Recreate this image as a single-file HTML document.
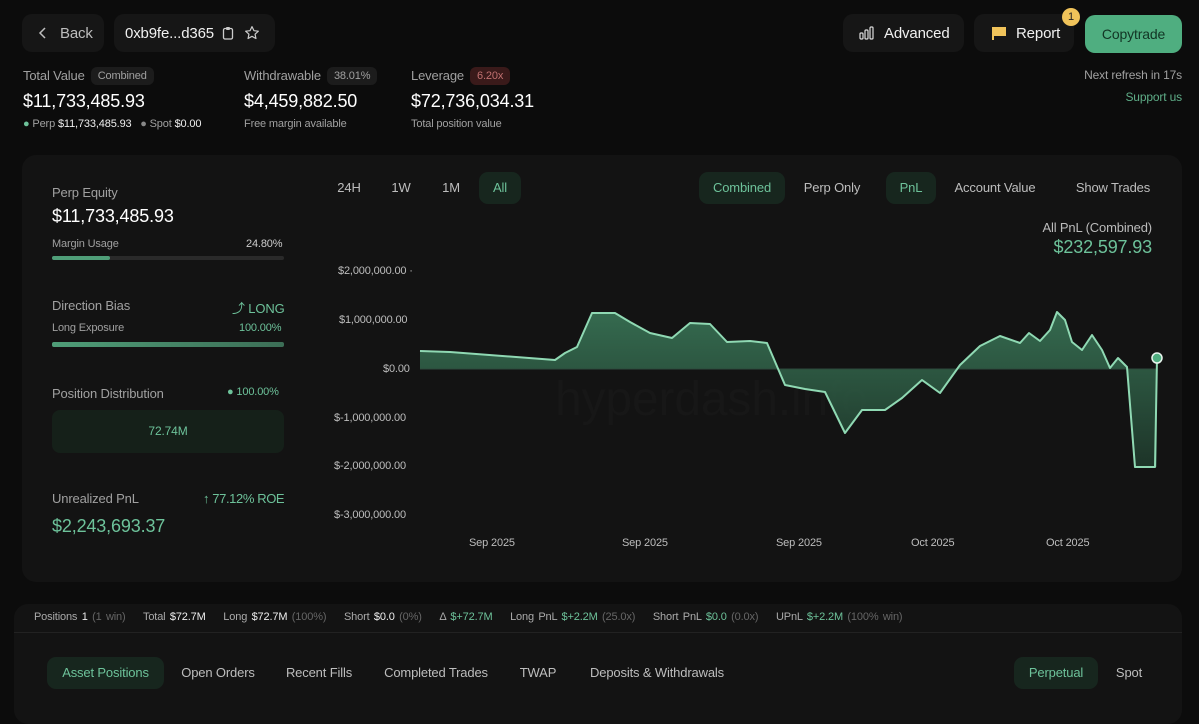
<!DOCTYPE html>
<html><head><meta charset="utf-8"><style>
*{box-sizing:border-box;margin:0;padding:0}
body{width:1199px;height:711px;background:#0c0c0c;font-family:"Liberation Sans",sans-serif;color:#e8e8e8;position:relative;overflow:hidden;letter-spacing:-0.15px}
.a{position:absolute;white-space:nowrap}
.btn{position:absolute;background:#161616;border-radius:10px;height:38px;display:flex;align-items:center;font-size:15px}
.g{color:#6dc29a}
.mut{color:#a0a0a0}
.pill{display:inline-block;background:#1c1c1c;border-radius:6px;padding:3px 7px;font-size:11px;color:#a0a0a0;margin-left:6px;vertical-align:1px}
.card{position:absolute;background:#131313;border-radius:14px}
.tab{position:absolute;font-size:13px;color:#bdbdbd;height:32px;line-height:32px;border-radius:9px;text-align:center}
.on{background:#17261e;color:#6dc29a}
.yl{position:absolute;left:334px;font-size:11px;color:#bdbdbd}
.xl{position:absolute;top:537px;font-size:11px;color:#bdbdbd}
.bar{position:absolute;height:4px;border-radius:2px;background:#2a2a2a}
</style></head><body>
<div class="btn" style="left:22px;top:14px;width:82px;padding-left:16px;color:#bdbdbd"><svg width="10" height="14" viewBox="0 0 10 14"><path d="M7 2 2 7l5 5" stroke="#bdbdbd" stroke-width="1.5" fill="none"/></svg><span style="margin-left:12px">Back</span></div>
<div class="btn" style="left:114px;top:14px;width:161px;padding-left:11px;color:#f0f0f0">0xb9fe...d365
<svg style="margin-left:8px" width="12" height="14" viewBox="0 0 12 14"><rect x="1.5" y="2.5" width="9" height="10.5" rx="1.5" stroke="#ccc" fill="none" stroke-width="1.3"/><rect x="4" y="1" width="4" height="3" rx="1" fill="#ccc"/></svg>
<svg style="margin-left:10px" width="16" height="16" viewBox="0 0 24 24"><path d="M12 2.5l2.9 6 6.6.8-4.9 4.5 1.3 6.5L12 17l-5.9 3.3 1.3-6.5L2.5 9.3l6.6-.8z" stroke="#ccc" stroke-width="1.8" fill="none" stroke-linejoin="round"/></svg></div>

<div class="btn" style="left:843px;top:14px;width:121px;padding-left:16px;color:#f0f0f0"><svg width="16" height="14" viewBox="0 0 16 14"><rect x="1" y="7" width="3" height="6" rx="1" stroke="#ddd" fill="none" stroke-width="1.2"/><rect x="6" y="4" width="3" height="9" rx="1" stroke="#ddd" fill="none" stroke-width="1.2"/><rect x="11" y="1" width="3" height="12" rx="1" stroke="#ddd" fill="none" stroke-width="1.2"/></svg><span style="margin-left:9px">Advanced</span></div>
<div class="btn" style="left:974px;top:14px;width:100px;padding-left:17px;color:#f0f0f0"><svg width="16" height="14" viewBox="0 0 16 14"><path d="M1 1h14v9H3v4H1z" fill="#f0c35a"/></svg><span style="margin-left:9px">Report</span></div>
<div class="a" style="left:1062px;top:8px;width:18px;height:18px;border-radius:9px;background:#f0c35a;color:#222;font-size:11px;text-align:center;line-height:18px">1</div>
<div class="btn" style="left:1085px;top:15px;width:97px;background:#4fae80;color:#123524;justify-content:center;font-size:14px">Copytrade</div>
<div class="a mut" style="right:17px;top:68px;font-size:12px">Next refresh in 17s</div>
<div class="a g" style="right:17px;top:90px;font-size:12px;color:#5fae88">Support us</div>

<div class="a mut" style="left:23px;top:67px;font-size:13px">Total Value<span class="pill">Combined</span></div>
<div class="a" style="left:23px;top:91px;font-size:18px;color:#fff">$11,733,485.93</div>
<div class="a mut" style="left:23px;top:118px;font-size:11px"><span class="g">●</span> Perp <span style="color:#eee">$11,733,485.93</span> &nbsp; <span style="color:#888">●</span> Spot <span style="color:#eee">$0.00</span></div>
<div class="a mut" style="left:244px;top:67px;font-size:13px">Withdrawable<span class="pill">38.01%</span></div>
<div class="a" style="left:244px;top:91px;font-size:18px;color:#fff">$4,459,882.50</div>
<div class="a mut" style="left:244px;top:118px;font-size:11px">Free margin available</div>
<div class="a mut" style="left:411px;top:67px;font-size:13px">Leverage<span class="pill" style="background:#3a1a1a;color:#c07070">6.20x</span></div>
<div class="a" style="left:411px;top:91px;font-size:18px;color:#fff">$72,736,034.31</div>
<div class="a mut" style="left:411px;top:118px;font-size:11px">Total position value</div>

<div class="card" style="left:22px;top:155px;width:1160px;height:427px"></div>
<div class="a mut" style="left:52px;top:185px;font-size:13px">Perp Equity</div>
<div class="a" style="left:52px;top:206px;font-size:18px;color:#fff">$11,733,485.93</div>
<div class="a mut" style="left:52px;top:238px;font-size:11px">Margin Usage</div>
<div class="a mut" style="left:246px;top:238px;font-size:11px;color:#ccc">24.80%</div>
<div class="bar" style="left:52px;top:256px;width:232px"></div><div class="bar" style="left:52px;top:256px;width:58px;background:#4f9e78"></div>
<div class="a mut" style="left:52px;top:298px;font-size:13px">Direction Bias</div>
<div class="a g" style="left:232px;top:298px;font-size:13px">⤴ LONG</div>
<div class="a mut" style="left:52px;top:322px;font-size:11px">Long Exposure</div>
<div class="a g" style="left:239px;top:322px;font-size:11px">100.00%</div>
<div class="bar" style="left:52px;top:342px;width:232px;height:5px;background:linear-gradient(90deg,#4f9e78,#3c6e56)"></div>
<div class="a mut" style="left:52px;top:386px;font-size:13px">Position Distribution</div>
<div class="a g" style="left:227px;top:386px;font-size:11px">● 100.00%</div>
<div class="a" style="left:52px;top:410px;width:232px;height:43px;border-radius:8px;background:#152019;color:#6dc29a;font-size:12px;text-align:center;line-height:43px">72.74M</div>
<div class="a mut" style="left:52px;top:491px;font-size:13px">Unrealized PnL</div>
<div class="a g" style="left:203px;top:491px;font-size:13px;letter-spacing:-0.4px">↑ 77.12% ROE</div>
<div class="a g" style="left:52px;top:516px;font-size:18px">$2,243,693.37</div>

<div class="tab" style="left:328px;top:172px;width:42px">24H</div>
<div class="tab" style="left:382px;top:172px;width:38px">1W</div>
<div class="tab" style="left:432px;top:172px;width:38px">1M</div>
<div class="tab on" style="left:479px;top:172px;width:42px">All</div>
<div class="tab on" style="left:699px;top:172px;width:86px">Combined</div>
<div class="tab" style="left:795px;top:172px;width:74px">Perp Only</div>
<div class="tab on" style="left:886px;top:172px;width:50px">PnL</div>
<div class="tab" style="left:944px;top:172px;width:102px">Account Value</div>
<div class="tab" style="left:1066px;top:172px;width:94px">Show Trades</div>
<div class="a mut" style="right:47px;top:220px;font-size:13px;color:#bbb">All PnL (Combined)</div>
<div class="a g" style="right:47px;top:237px;font-size:18px">$232,597.93</div>

<div class="yl" style="top:265px;left:338px">$2,000,000.00 ·</div>
<div class="yl" style="top:314px;left:339px">$1,000,000.00</div>
<div class="yl" style="top:363px;left:383px">$0.00</div>
<div class="yl" style="top:412px">$-1,000,000.00</div>
<div class="yl" style="top:460px">$-2,000,000.00</div>
<div class="yl" style="top:509px">$-3,000,000.00</div>
<div class="xl" style="left:469px">Sep 2025</div>
<div class="xl" style="left:622px">Sep 2025</div>
<div class="xl" style="left:776px">Sep 2025</div>
<div class="xl" style="left:911px">Oct 2025</div>
<div class="xl" style="left:1046px">Oct 2025</div>
<div class="a" style="left:555px;top:372px;font-size:48px;color:#171717">hyperdash.info</div>
<svg class="a" style="left:0;top:0" width="1199" height="711">
<defs><linearGradient id="gr" x1="0" y1="0" x2="0" y2="1"><stop offset="0" stop-color="#3b7a5a"/><stop offset="1" stop-color="#1f3a2c"/></linearGradient></defs>
<path d="M420 369 L420 351 L450 352 L555 360 L565 353 L577 347 L592 313 L615 313 L630 322 L650 333 L672 338 L690 323 L710 324 L727 342 L750 341 L767 343 L785 385 L805 389 L825 392 L845 433 L862 410 L885 410 L902 398 L922 380 L940 393 L960 365 L980 346 L1000 336 L1020 343 L1029 333 L1040 341 L1050 330 L1057 312 L1065 320 L1072 342 L1082 350 L1092 335 L1102 350 L1110 368 L1118 358 L1127 367 L1135 467 L1157 467 L1157 369 Z" fill="url(#gr)" opacity="0.85"/>
<line x1="420" y1="369" x2="1157" y2="369" stroke="#2e4a3c" stroke-width="1"/>
<path d="M420 351 L450 352 L555 360 L565 353 L577 347 L592 313 L615 313 L630 322 L650 333 L672 338 L690 323 L710 324 L727 342 L750 341 L767 343 L785 385 L805 389 L825 392 L845 433 L862 410 L885 410 L902 398 L922 380 L940 393 L960 365 L980 346 L1000 336 L1020 343 L1029 333 L1040 341 L1050 330 L1057 312 L1065 320 L1072 342 L1082 350 L1092 335 L1102 350 L1110 368 L1118 358 L1127 367 L1135 467 L1155 467 L1157 358" fill="none" stroke="#8fd9b3" stroke-width="2" stroke-linejoin="round"/>
<circle cx="1157" cy="358" r="5" fill="#4fae80" stroke="#e8f5ee" stroke-width="1.5"/>
</svg>

<div class="card" style="left:14px;top:604px;width:1168px;height:120px;border-radius:14px"></div>
<div class="a" style="left:14px;top:632px;width:1168px;height:1px;background:#222"></div>
<div class="a mut" style="left:34px;top:611px;font-size:11px;color:#aaa;word-spacing:1.5px">Positions <span style="color:#eee">1</span> <span style="color:#666">(1 win)</span> &nbsp;&nbsp; Total <span style="color:#eee">$72.7M</span> &nbsp;&nbsp; Long <span style="color:#eee">$72.7M</span> <span style="color:#666">(100%)</span> &nbsp;&nbsp; Short <span style="color:#eee">$0.0</span> <span style="color:#666">(0%)</span> &nbsp;&nbsp; Δ <span class="g">$+72.7M</span> &nbsp;&nbsp; Long PnL <span class="g">$+2.2M</span> <span style="color:#666">(25.0x)</span> &nbsp;&nbsp; Short PnL <span class="g">$0.0</span> <span style="color:#666">(0.0x)</span> &nbsp;&nbsp; UPnL <span class="g">$+2.2M</span> <span style="color:#666">(100% win)</span></div>
<div class="tab on" style="left:47px;top:657px;width:117px">Asset Positions</div>
<div class="tab" style="left:176px;top:657px;width:84px">Open Orders</div>
<div class="tab" style="left:280px;top:657px;width:78px">Recent Fills</div>
<div class="tab" style="left:378px;top:657px;width:116px">Completed Trades</div>
<div class="tab" style="left:514px;top:657px;width:48px">TWAP</div>
<div class="tab" style="left:582px;top:657px;width:150px">Deposits &amp; Withdrawals</div>
<div class="tab on" style="left:1014px;top:657px;width:84px">Perpetual</div>
<div class="tab" style="left:1108px;top:657px;width:42px">Spot</div>
</body></html>
